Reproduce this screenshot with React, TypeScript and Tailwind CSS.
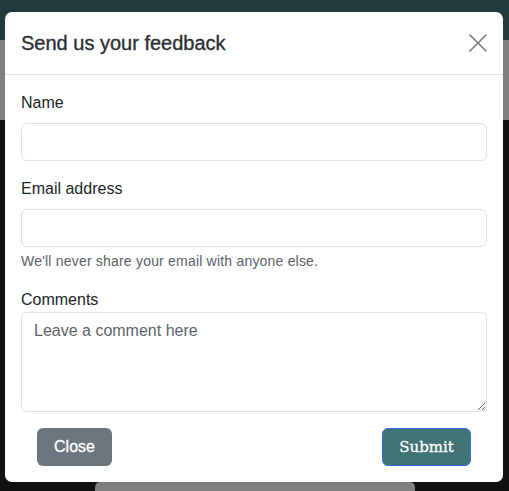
export default function App() {
  return (
    <div className="relative w-[509px] h-[491px] overflow-hidden bg-[#111111] font-['Liberation_Sans',sans-serif] text-[#212529]">
      {/* page behind the backdrop */}
      <div className="flex flex-col h-full">
        <div className="h-[40px] bg-[#213a3c]" />
        <div className="h-[80px] bg-[#7f7f7f]" />
        <div className="flex-1 bg-[#121212]" />
        <div className="mx-auto w-[320px] h-[10px] rounded-t-md bg-[#808080] border-t border-[#3a3a3a]" />
      </div>

      {/* modal */}
      <div className="absolute left-[5px] top-[12px] w-[498px] h-[470px] bg-white rounded-[7px] flex flex-col">
        <div className="h-[63px] flex items-center justify-between px-4 border-b border-[#dee2e6]">
          <h5 className="text-[20px] font-medium leading-6 text-[#2b2f33] [-webkit-text-stroke:0.35px_#2b2f33]">Send us your feedback</h5>
          <button className="w-[18px] h-[18px] flex items-center justify-center">
            <svg width="18" height="18" viewBox="0 0 18 18">
              <path d="M1 1 L17 17 M17 1 L1 17" stroke="#7a7a7a" strokeWidth="1.6" strokeLinecap="round" />
            </svg>
          </button>
        </div>

        <div className="px-4 pt-4">
          <label className="block text-base leading-6 mb-2">Name</label>
          <input className="block w-full h-[38px] rounded-md border border-[#dee2e6] px-3 mb-4 outline-none" />

          <label className="block text-base leading-6 mb-2">Email address</label>
          <input type="email" className="block w-full h-[38px] rounded-md border border-[#dee2e6] px-3 outline-none" />
          <p className="mt-1 text-sm leading-[21px] tracking-[0.2px] text-[#5c636a] mb-4">We'll never share your email with anyone else.</p>

          <label className="block text-base leading-6">Comments</label>
          <textarea
            placeholder="Leave a comment here"
            className="block w-full h-[100px] rounded-md border border-[#dee2e6] px-3 py-1.5 text-base leading-6 outline-none placeholder:text-[#5f6368]"
          />
        </div>

        <div className="flex justify-between px-8 pt-4">
          <button className="h-[38px] w-[75px] rounded-md bg-[#6c757d] text-white text-base [-webkit-text-stroke:0.3px_white]">Close</button>
          <button className="h-[38px] w-[89px] rounded-md bg-[#407474] border border-[#3867f0] text-white text-[15px] font-['DejaVu_Serif',serif] [-webkit-text-stroke:0.3px_white]">
            Submit
          </button>
        </div>
      </div>
    </div>
  );
}
